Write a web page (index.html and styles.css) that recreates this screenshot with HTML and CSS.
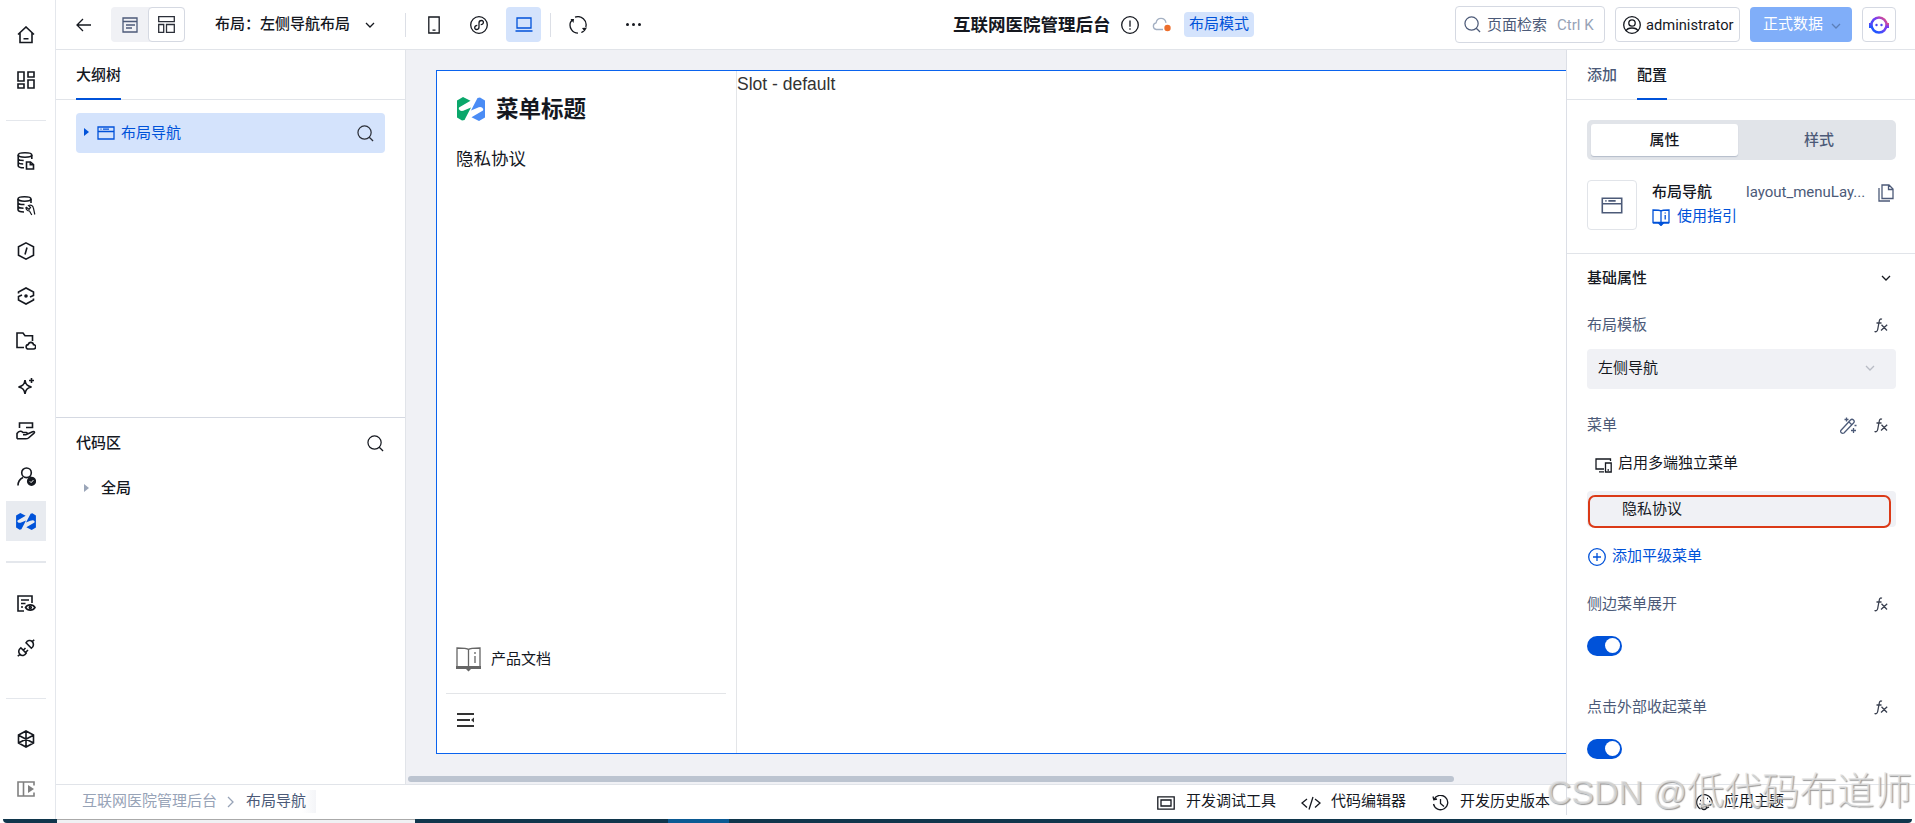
FILE: index.html
```html
<!DOCTYPE html>
<html lang="zh-CN">
<head>
    <meta charset="UTF-8">
    <meta name="viewport" content="width=device-width, initial-scale=1.0">
    <title>互联网医院管理后台</title>
    <link rel="stylesheet" href="styles.css">
</head>
<body>
    <!-- shared icons -->
    <svg class="sprite" width="0" height="0">
        <symbol id="i-search" viewBox="0 0 18 18"><circle cx="8" cy="8" r="7"/><path d="M13 13l4 4"/></symbol>
        <symbol id="i-down" viewBox="0 0 10 10"><path d="M1 3l4 4 4-4"/></symbol>
        <symbol id="i-window" viewBox="0 0 18 14"><path d="M1 1h16v12H1zM1 5.500h16M3.500 3.200h1M6 3.200h6"/></symbol>
        <symbol id="i-book" viewBox="0 0 18 17"><path d="M9 2.200C8 1 6 1 1 1v12.500h16V1c-5 0-7 0-8 1.200zM9 2v11.500M1 14h16M13.200 6v4.500M13.200 3.500v1"/><path d="M7 14.500h4L9 16.500z" fill="currentColor"/></symbol>
        <symbol id="i-fx" viewBox="0 0 14 15"><path d="M8 1.300C6.500.5 5.600 1.300 5.300 3L3.700 11.500C3.300 13.500 2 14.200.5 13.500M2.500 5h5M7.500 6.700l5.500 5.800M13.200 6.700L7 12.500"/></symbol>
        <symbol id="i-mark" viewBox="0 0 28 24"><path class="solid" d="M0 3.500L6 0l7.500 3.800L2 10.500q-1 1.500 1 3 2 1 5-.5l6-2.500L7.500 23 5 23.500l-5-3z"/></symbol>
    </svg>

    <div class="workspace">
        <nav class="rail">
            <a class="rail-item"><svg width="18" height="18" viewBox="0 0 18 18"><path d="M1 8.500L9 1l8 7.500M3 7v9.500h12V7M6.500 12.800h5"/></svg></a>
            <a class="rail-item"><svg width="18" height="18" viewBox="0 0 18 18"><path d="M1 1h6v9H1zM11 1h6v5h-6zM1 13h6v4H1zM11 9h6v8h-6z"/></svg></a>
            <div class="rail-line first"></div>
            <a class="rail-item"><svg width="18" height="18" viewBox="0 0 18 18"><ellipse cx="8" cy="3" rx="6.800" ry="2.200"/><path d="M1.200 3v10.800c0 1.200 2.500 2 5.800 2M14.800 3v4M1.200 6.500c0 1.500 2.500 2 5.500 2M1.200 10c0 1.500 2.300 2 5 2M9.500 10h4l3 2.500V17h-7zM13.300 10v2.800h3"/></svg></a>
            <a class="rail-item"><svg width="19" height="20" viewBox="0 0 19 20"><ellipse cx="7.500" cy="3" rx="6.500" ry="2.200"/><path d="M1 3v10.500c0 1.500 2.500 2.500 6 2.500M14 3v4M1 6.500c0 1.500 3 2.300 6.500 2M1 10c0 1.500 2.500 2.200 5.500 2.200"/><path class="thin" d="M9 11c-.3 2.500 1.500 4 3.500 4l2.300 4M9 11l3 2.300 1.500-1.800-2-2c2.500-1 4.500.3 5 3l1.300 6"/></svg></a>
            <a class="rail-item"><svg width="18" height="18" viewBox="0 0 18 18"><path d="M9 .9l7.500 3.800v8.600L9 17.100l-7.500-3.800V4.700zM10 5.500l-2 7"/></svg></a>
            <a class="rail-item"><svg width="18" height="18" viewBox="0 0 18 18"><path d="M1.500 6.500V5L9 1l7.500 4v3.500L13 10M16.500 11.500V13L9 17l-7.500-4V9.500L5 8"/><circle cx="9" cy="9" r="1" fill="currentColor"/></svg></a>
            <a class="rail-item"><svg width="20" height="18" viewBox="0 0 20 18"><path d="M8 15.500H1V1h6l2 2.800h7.500V9M12.500 17a2.200 2.200 0 0 1-.3-4.400c.8-3 4.600-3 5.300 0a2.200 2.200 0 0 1 0 4.400z"/></svg></a>
            <a class="rail-item"><svg width="18" height="18" viewBox="0 0 18 18"><path d="M8 3c.7 4.500 2 6 6.500 7-4.500 1-5.800 2.500-6.500 7-.7-4.500-2-6-6.500-7C6 9 7.300 7.500 8 3zM14.500 1v5M12 3.500h5"/></svg></a>
            <a class="rail-item"><svg width="20" height="18" viewBox="0 0 20 18"><path d="M3.500 6V1h13v4.500H10M1 16.800V11.500c2-3 4.500-2.500 6-1h3.300c1.500 0 1.200 2.300-.5 2.300H7M11.500 12l5-2.300c2-.8 2.600.6 1.300 1.700L12.500 16c-1 .8-1.800.8-3 .8H1"/></svg></a>
            <a class="rail-item"><svg width="19" height="19" viewBox="0 0 19 19"><circle cx="9.500" cy="5.800" r="4.800"/><path d="M1 18.500c0-4 2-6.500 5-8M13 10l1.500 1"/><circle cx="14.500" cy="14.300" r="3.800" fill="currentColor"/><path d="M12.800 14.300l1.300 1.300 2.300-2.500" stroke="#fff" stroke-width="1"/></svg></a>
            <a class="rail-item active"><svg width="20" height="17" viewBox="0 0 28 24"><use href="#i-mark" width="28" height="24"/><use href="#i-mark" width="28" height="24" transform="rotate(180 14 12)"/></svg></a>
            <div class="rail-line second"></div>
            <a class="rail-item"><svg width="19" height="17" viewBox="0 0 19 17"><path d="M7 16H1V1h14v7M4 5h8M4 8.500h4.500M4 12h2M8.500 12.500c2-3.500 7.500-3.500 9.500 0-2 3.500-7.500 3.500-9.500 0z"/><circle cx="13.300" cy="12.500" r="1"/></svg></a>
            <a class="rail-item"><svg width="18" height="18" viewBox="0 0 18 18"><path d="M.8 17.200l2-2M17.200.8l-2 2M3.800 8.800l5.400 5.400c-1.500 2.500-4.300 3-6.200 1.200s-1.700-5 .8-6.600zM9 3.800l5.400 5.400c2.500-1.600 2.600-4.800.8-6.600S10.500 1.300 9 3.800zM6.500 11l2-2M9 13l2-2"/></svg></a>
            <div class="rail-line third"></div>
            <a class="rail-item last"><svg width="18" height="18" viewBox="0 0 18 18"><path d="M9 1l7.500 4v8L9 17l-7.500-4V5zM9 1v16M1.500 5.200L16.500 13M16.500 5.200L1.500 13"/></svg></a>
            <a class="rail-item muted"><svg width="18" height="16" viewBox="0 0 18 16"><path d="M17 4.500V1H1v14h16v-3.500M6.500 1v14"/><path class="solid" d="M11 4l6 4-6 4z"/></svg></a>
        </nav>

        <div class="app">
            <header class="topbar">
                <svg class="back" width="16" height="14" viewBox="0 0 16 14"><path d="M15 7H1M7 1L1 7l6 6"/></svg>
                <div class="view-switch">
                    <span><svg width="16" height="16" viewBox="0 0 16 16"><path d="M1 1h14v14H1zM1 4.500h14M4 8h9M4 11h6"/></svg></span>
                    <span class="on"><svg width="17" height="17" viewBox="0 0 17 17"><path d="M.7.700h15.600v5H.7zM.7 8.500h5v7.800h-5zM8.500 8.500h7.800v7.800H8.500z"/></svg></span>
                </div>
                <div class="layout-name">布局：左侧导航布局</div>
                <svg class="layout-arrow" width="10" height="10"><use href="#i-down"/></svg>
                <i class="bar"></i>
                <div class="devices">
                    <span class="device"><svg width="12" height="18" viewBox="0 0 12 18"><path d="M.8 1h10.400v16H.8zM4.500 14.200h3"/></svg></span>
                    <span class="device"><svg width="18" height="18" viewBox="0 0 18 18"><circle cx="9" cy="9" r="8.300"/><path d="M7.300 9.300C4 9.500 4 13.500 6.500 13.500 8.500 13.500 9 12.500 9 11V7c0-1.500.8-2.500 2.500-2.500 2.800 0 2.500 4-.8 4.200"/></svg></span>
                    <span class="device on"><svg width="18" height="15" viewBox="0 0 18 15"><path d="M2 1h14v10H2zM.5 14h17"/></svg></span>
                </div>
                <i class="bar bar-2"></i>
                <svg class="refresh" width="18" height="18" viewBox="0 0 18 18"><path d="M6 1.200A8.200 8.200 0 0 1 16.800 11M14.800 15a8.200 8.200 0 0 1-2.500 1.500M9 17.200A8.200 8.200 0 0 1 1.500 6.300L3.500 3.500"/><path class="solid" d="M1.500 3L5 3l-.5 4zM13 12l5-.5-2.500 4z"/></svg>
                <div class="more"><i></i><i></i><i></i></div>

                <h1>互联网医院管理后台</h1>
                <svg class="info" width="18" height="18" viewBox="0 0 18 18"><circle cx="9" cy="9" r="8.300"/><path d="M9 4.500v6.300M9 12.300v1.500"/></svg>
                <svg class="cloud" width="19" height="15" viewBox="0 0 19 15"><path d="M11 12.500H4.300a3.400 3.400 0 0 1-.2-6.700C5 0 13 0 14 5.800"/><circle class="dot" cx="15.500" cy="11" r="3.200"/></svg>
                <span class="mode-tag">布局模式</span>

                <div class="top-actions">
                    <div class="box search-box"><svg width="17" height="17"><use href="#i-search"/></svg><span>页面检索</span><em>Ctrl K</em></div>
                    <div class="box user-box"><svg width="18" height="18" viewBox="0 0 18 18"><circle cx="9" cy="9" r="8.300"/><circle cx="9" cy="7" r="3.200"/><path d="M3 15c1.500-4 10.500-4 12 0"/></svg><span>administrator</span></div>
                    <div class="data-btn">正式数据<svg width="10" height="10"><use href="#i-down"/></svg></div>
                    <div class="box bot-box">
                        <svg width="20" height="18" viewBox="0 0 20 18">
                            <defs><linearGradient id="bot" x1="0" y1="1" x2="1" y2="0"><stop offset="0.200" stop-color="#2456ff"/><stop offset="0.600" stop-color="#7b3cf0"/><stop offset="1" stop-color="#f0507a"/></linearGradient></defs>
                            <circle cx="10" cy="9" r="7.500" fill="none" stroke="url(#bot)" stroke-width="2.500"/>
                            <path class="solid" fill="url(#bot)" d="M0 7h3v5H0zM17 7h3v5h-3z"/>
                            <circle cx="7.500" cy="9" r="1.200" class="solid"/><circle cx="12.500" cy="9" r="1.200" class="solid"/>
                        </svg>
                    </div>
                </div>
            </header>

            <div class="main">
                <aside class="left-panel">
                    <div class="tabs"><span class="tab on">大纲树</span></div>
                    <div class="outline">
                        <div class="tree-row">
                            <i class="caret"></i>
                            <svg width="18" height="14"><use href="#i-window"/></svg>
                            <span>布局导航</span>
                            <svg class="find" width="17" height="17"><use href="#i-search"/></svg>
                        </div>
                    </div>
                    <div class="code-area">
                        <div class="code-head">代码区<svg width="17" height="17"><use href="#i-search"/></svg></div>
                        <div class="code-row"><i class="caret"></i>全局</div>
                    </div>
                </aside>

                <section class="canvas">
                    <div class="frame">
                        <div class="menu">
                            <div class="menu-title">
                                <svg width="28" height="24" viewBox="0 0 28 24"><use class="green" href="#i-mark" width="28" height="24"/><use class="blue" href="#i-mark" width="28" height="24" transform="rotate(180 14 12)"/></svg>
                                <span>菜单标题</span>
                            </div>
                            <div class="menu-item">隐私协议</div>
                            <div class="menu-doc"><svg width="25" height="25" viewBox="0 0 25 25"><path d="M12.500 2.500C11 1 8 1 1 1v19.500h23V1c-7 0-10 0-11.500 1.500zM12.500 2.500V21M19 9v7M19 5v2"/><path class="solid" d="M0 19h25v3H15l-2.500 2.500L10 22H0z"/></svg><span>产品文档</span></div>
                            <div class="menu-fold"><svg width="18" height="14" viewBox="0 0 18 14"><path d="M0 1h17M0 7h13M0 13h17"/><path class="solid" d="M14 7l3-2.500v5z"/></svg></div>
                        </div>
                        <div class="slot">Slot - default</div>
                    </div>
                    <div class="scrollbar"></div>
                </section>

                <aside class="right-panel">
                    <div class="tabs"><span class="tab">添加</span><span class="tab on">配置</span></div>
                    <div class="summary">
                        <div class="segment"><span class="on">属性</span><span>样式</span></div>
                        <div class="component">
                            <div class="thumb"><svg width="22" height="17"><use href="#i-window"/></svg></div>
                            <div class="component-info">
                                <div class="component-name"><b>布局导航</b><span>layout_menuLay...</span><svg width="16" height="18" viewBox="0 0 16 18"><path d="M4 1h7l4 4v9.500H4zM10.500 1v4.500H15M1 4v13h11"/></svg></div>
                                <div class="guide"><svg width="18" height="17"><use href="#i-book"/></svg>使用指引</div>
                            </div>
                        </div>
                    </div>
                    <div class="props">
                        <div class="props-head">基础属性<svg width="10" height="10"><use href="#i-down"/></svg></div>
                        <div class="label">布局模板<svg class="fx" width="14" height="15"><use href="#i-fx"/></svg></div>
                        <div class="select">左侧导航<svg width="10" height="10"><use href="#i-down"/></svg></div>
                        <div class="label menu-label">菜单<svg class="wand" width="17" height="17" viewBox="0 0 17 17"><path d="M.8 13.500L10.500 3q1.500-1.500 3 0t0 3L4 16q-1.500.8-2.700-.3T.8 13.500zM9 5l3 3M6.500.5v4M4.500 2.500h4M14.500 8.500h2M13.500 11v5M11 13.500h5"/></svg><svg class="fx" width="14" height="15"><use href="#i-fx"/></svg></div>
                        <div class="multi"><svg width="17" height="15" viewBox="0 0 17 15"><path d="M15.500 3V1H1v10h8M4 13.800h5M10.500 5h5.700v9h-5.700zM12.500 12h1.500"/></svg>启用多端独立菜单</div>
                        <div class="menu-entry"><div class="entry-mark">隐私协议</div></div>
                        <div class="add"><svg width="18" height="18" viewBox="0 0 18 18"><circle cx="9" cy="9" r="8.300"/><path d="M9 5v8M5 9h8"/></svg>添加平级菜单</div>
                        <div class="label">侧边菜单展开<svg class="fx" width="14" height="15"><use href="#i-fx"/></svg></div>
                        <div class="switch"></div>
                        <div class="label outside">点击外部收起菜单<svg class="fx" width="14" height="15"><use href="#i-fx"/></svg></div>
                        <div class="switch"></div>
                    </div>
                </aside>
            </div>

            <footer class="statusbar">
                <div class="crumbs"><span>互联网医院管理后台</span><svg width="7" height="12" viewBox="0 0 7 12"><path d="M1 1l5 5-5 5"/></svg><span class="current">布局导航</span></div>
                <div class="tools">
                    <span><svg width="18" height="14" viewBox="0 0 18 14"><path d="M.8.800h16.400v12.400H.8zM4 4h10v6H4z"/></svg>开发调试工具</span>
                    <span class="editor"><svg width="20" height="14" viewBox="0 0 20 14"><path d="M6 3L1 7l5 4.500M14 3l5 4-5 4.500M12 1L8 13.500"/></svg>代码编辑器</span>
                    <span class="history"><svg width="17" height="16" viewBox="0 0 17 16"><path d="M2 4.500A7.200 7.200 0 1 1 1.500 9M1 1.500l.8 3.300L5 4M8.500 4v4.500l3.500 3"/></svg>开发历史版本</span>
                </div>
                <div class="theme"><svg width="17" height="17" viewBox="0 0 17 17"><path d="M4.500 15A7.700 7.700 0 1 1 16 9c0 2-2 2.500-4 2"/><circle cx="8" cy="13" r="2.500"/><path d="M4 6.500h1M7 4h1M11 4.500h1M13 7.500h1M3.500 10h1M11 14l2-1"/></svg>应用主题</div>
            </footer>
        </div>
    </div>
    <div class="taskbar"><i class="light"></i><i class="running"></i></div>
    <div class="watermark"><span>CSDN @</span>低代码布道师</div>
</body>
</html>
```
FILE: styles.css
```css
* {
    box-sizing: border-box;
}
body {
    margin: 0;
    width: 1915px;
    height: 823px;
    overflow: hidden;
    background: #fff;
    color: #15181f;
    font-family: Roboto, "Noto Sans CJK SC", sans-serif;
    font-size: 15px;
    line-height: 20px;
}
svg {
    display: block;
    flex: none;
    fill: none;
    stroke: currentColor;
    stroke-width: 1.3;
}
.sprite {
    position: absolute;
}
.solid {
    stroke: none;
}
path.solid:not([fill]) {
    fill: currentColor;
}
.workspace {
    display: flex;
    height: 819px;
}

/* icon rail */
.rail {
    display: flex;
    flex-direction: column;
    width: 56px;
    flex: none;
    padding: 15px 0 0 6px;
    border-right: 1px solid #e4e7ec;
}
.rail-item {
    display: flex;
    align-items: center;
    justify-content: center;
    flex: none;
    width: 40px;
    height: 40px;
    margin-bottom: 5px;
}
.rail-item svg {
    stroke-width: 1.6;
}
.rail-item .thin {
    stroke-width: 1.2;
}
.rail-item.active {
    background: #e8ebf0;
    color: #0052d9;
}
.rail-item.muted {
    margin-bottom: 0;
    color: #808080;
}
.rail-item.last {
    margin-bottom: 10px;
}
.rail-line {
    flex: none;
    width: 40px;
    height: 1px;
    background: #e4e7ec;
}
.rail-line.first {
    margin: 15px 0 20px;
}
.rail-line.second {
    height: 2px;
    margin: 15px 0 20px;
}
.rail-line.third {
    margin: 25px 0 20px;
}

.app {
    display: flex;
    flex-direction: column;
    flex: 1;
    min-width: 0;
}

/* top bar */
.topbar {
    display: flex;
    align-items: center;
    height: 50px;
    flex: none;
    padding: 0 19px 0 20px;
    border-bottom: 1px solid #e1e4e9;
}
.view-switch {
    display: flex;
    margin-left: 19px;
    border-radius: 4px;
    background: #f0f1f5;
    color: #4c5a78;
}
.view-switch span {
    display: flex;
    align-items: center;
    justify-content: center;
    width: 37px;
    height: 35px;
}
.view-switch .on {
    border: 1px solid #d5d9e2;
    border-radius: 4px;
    background: #fff;
    color: #2b2f38;
}
.layout-name {
    margin: -2px 0 0 30px;
    width: 135px;
    font-weight: 500;
    white-space: nowrap;
}
.layout-arrow {
    margin-left: 15px;
}
.bar {
    width: 1px;
    height: 24px;
    margin-left: 30px;
    background: #dcdfe6;
}
.bar-2 {
    margin-left: 9px;
}
.devices {
    display: flex;
    gap: 10px;
    margin-left: 10px;
}
.device {
    display: flex;
    align-items: center;
    justify-content: center;
    width: 35px;
    height: 35px;
    border-radius: 4px;
}
.device.on {
    background: #d4e3fc;
    color: #0052d9;
}
.refresh {
    margin-left: 18px;
}
.more {
    display: flex;
    gap: 3px;
    margin-left: 39px;
}
.more i {
    width: 3px;
    height: 3px;
    border-radius: 50%;
    background: #15181f;
}
h1 {
    margin: 1px 0 0 312px;
    width: 158px;
    font-size: 17.5px;
    font-weight: 700;
    white-space: nowrap;
}
.info {
    margin-left: 10px;
}
.cloud {
    margin-left: 13px;
    color: #a3afc2;
}
.cloud .dot {
    fill: #ed6f2d;
    stroke: none;
}
.mode-tag {
    width: 70px;
    height: 25px;
    margin-left: 13px;
    border-radius: 4px;
    background: #d4e3fc;
    color: #0052d9;
    line-height: 24px;
    text-align: center;
}
.top-actions {
    display: flex;
    align-items: center;
    gap: 10px;
    margin-left: auto;
}
.box {
    display: flex;
    align-items: center;
    height: 35px;
    border: 1px solid #d5d9e2;
    border-radius: 4px;
}
.search-box {
    width: 150px;
    height: 37px;
    padding-left: 8px;
    color: #4c5a78;
}
.search-box span {
    margin-left: 6px;
}
.search-box em {
    margin-left: 10px;
    color: #97a3b7;
    font-style: normal;
}
.user-box {
    width: 125px;
    padding-left: 7px;
}
.user-box span {
    margin-left: 5px;
    font-size: 14.700px;
}
.data-btn {
    display: flex;
    width: 102px;
    height: 35px;
    padding-left: 13px;
    border-radius: 4px;
    background: #80aef9;
    color: #fff;
    line-height: 34px;
}
.data-btn svg {
    margin: 14px 0 0 8px;
    color: #5c7fb8;
}
.bot-box {
    width: 34px;
    justify-content: center;
}
.bot-box circle.solid {
    fill: #4a48f0;
}

.main {
    display: flex;
    flex: 1;
    min-height: 0;
}
.tabs {
    display: flex;
    gap: 20px;
    height: 50px;
    padding-left: 20px;
    border-bottom: 1px solid #e1e4e9;
}
.tab {
    height: 50px;
    color: #4c5a78;
    font-weight: 500;
    line-height: 50px;
}
.tab.on {
    border-bottom: 2px solid #0052d9;
    color: #15181f;
}

/* outline and code panels */
.left-panel {
    width: 350px;
    flex: none;
    border-right: 1px solid #e1e4e9;
}
.outline {
    height: 317px;
    padding: 13px 20px;
}
.tree-row {
    display: flex;
    align-items: center;
    height: 40px;
    padding: 0 11px 0 8px;
    border-radius: 4px;
    background: #d4e3fc;
    color: #0052d9;
}
.caret {
    border-left: 5px solid currentColor;
    border-top: 4px solid transparent;
    border-bottom: 4px solid transparent;
}
.tree-row .caret {
    margin: -3px 8px 0 0;
}
.tree-row span {
    margin: -1px 0 0 6px;
}
.tree-row .find {
    margin-left: auto;
    color: #2b2f38;
}
.code-area {
    padding: 15px 21px 0 20px;
    border-top: 1px solid #d5d9e2;
    font-weight: 500;
}
.code-head {
    display: flex;
    align-items: center;
    justify-content: space-between;
}
.code-row {
    display: flex;
    align-items: center;
    margin-top: 25px;
    padding-left: 8px;
}
.code-row .caret {
    margin-right: 12px;
    border-left-color: #9aa5b8;
}

/* design canvas */
.canvas {
    display: flex;
    flex-direction: column;
    flex: 1;
    min-width: 0;
    padding: 20px 0 0 30px;
    background: #f0f1f5;
}
.frame {
    display: flex;
    height: 684px;
    border: 1px solid #0a63ee;
    border-right: 0;
    background: #fff;
}
.menu {
    display: flex;
    flex-direction: column;
    width: 300px;
    border-right: 1px solid #e3e5e8;
}
.menu-title {
    display: flex;
    align-items: center;
    height: 34px;
    margin: 21px 0 0 20px;
    font-size: 22.500px;
    font-weight: 700;
}
.menu-title .green {
    color: #0aa76b;
}
.menu-title .blue {
    color: #4a8cf5;
}
.menu-title span {
    margin: -1px 0 0 11px;
}
.menu-item {
    margin: 21px 0 0 19px;
    font-size: 17.500px;
    line-height: 24px;
}
.menu-doc {
    display: flex;
    align-items: center;
    margin: auto 0 21px 19px;
}
.menu-doc svg {
    color: #666;
}
.menu-doc span {
    margin: -2px 0 0 10px;
}
.menu-fold {
    height: 60px;
    margin: 0 10px 0 9px;
    padding: 19px 0 0 11px;
    border-top: 1px solid #e3e5e8;
    color: #333;
}
.menu-fold svg {
    stroke-width: 2;
}
.slot {
    color: #333;
    font-family: "Liberation Sans", Arial, sans-serif;
    font-size: 17.500px;
    line-height: 27px;
}
.scrollbar {
    width: 1046px;
    height: 6px;
    margin: 22px 0 0 -28px;
    border-radius: 3px;
    background: #bcc4d0;
}

/* settings panel */
.right-panel {
    width: 349px;
    flex: none;
    border-left: 1px solid #dcdfe6;
}
.summary {
    height: 154px;
    padding: 20px 19px 0 20px;
    border-bottom: 1px solid #e1e4e9;
}
.segment {
    display: flex;
    height: 40px;
    padding: 4px;
    border-radius: 5px;
    background: #e1e4e9;
    color: #4c5a78;
    font-weight: 500;
    line-height: 32px;
    text-align: center;
}
.segment span {
    flex: 1;
    padding-left: 8px;
}
.segment .on {
    flex: 0 0 147px;
    height: 32px;
    padding-left: 0;
    border-radius: 3px;
    background: #fff;
    box-shadow: 0 1px 1px #b4bcca;
    color: #15181f;
}
.component {
    display: flex;
    margin-top: 20px;
}
.thumb {
    display: flex;
    align-items: center;
    justify-content: center;
    width: 50px;
    height: 50px;
    border: 1px solid #e1e4e9;
    border-radius: 4px;
    color: #4c5a78;
}
.component-info {
    flex: 1;
    margin-left: 15px;
    padding-top: 1px;
}
.component-name {
    display: flex;
    align-items: center;
    color: #4c5a78;
}
.component-name b {
    width: 94px;
    color: #15181f;
    font-weight: 500;
}
.component-name svg {
    margin: 3px 2px 0 auto;
}
.guide {
    display: flex;
    align-items: center;
    gap: 7px;
    margin-top: 4px;
    color: #0052d9;
}
.guide svg {
    margin-top: 2px;
}
.props {
    padding: 14px 19px 0 20px;
}
.props-head,
.label {
    display: flex;
    align-items: center;
    height: 20px;
}
.props-head {
    margin-bottom: 27px;
    font-weight: 500;
}
.props-head svg {
    margin-left: auto;
    margin-right: 5px;
}
.label {
    color: #4c5a78;
}
.label .fx {
    margin: 0 8px 0 auto;
    color: #3a4050;
}
.select {
    display: flex;
    height: 40px;
    margin-top: 14px;
    padding: 0 21px 0 11px;
    border-radius: 4px;
    background: #f0f1f5;
    line-height: 38px;
}
.select svg {
    margin: 14px 0 0 auto;
    color: #b8bcc5;
}
.menu-label {
    margin-top: 26px;
}
.menu-label .wand {
    margin-left: auto;
}
.menu-label .fx {
    margin-left: 17px;
}
.multi {
    display: flex;
    align-items: center;
    gap: 6px;
    margin-top: 18px;
    padding-left: 8px;
}
.multi svg {
    margin-top: 4px;
}
.menu-entry {
    height: 36px;
    margin: 18px 0;
    padding: 4px 5px 0 1px;
    border-radius: 4px;
    background: #f0f1f5;
}
.entry-mark {
    height: 33px;
    padding-left: 32px;
    border: 2px solid #db3a17;
    border-radius: 7px;
    line-height: 24px;
}
.add {
    display: flex;
    align-items: center;
    gap: 6px;
    margin-bottom: 28px;
    padding-left: 1px;
    color: #0052d9;
}
.add svg {
    margin-top: 3px;
}
.switch {
    width: 35px;
    height: 20px;
    margin-top: 22px;
    padding: 2px 2px 2px 18px;
    border-radius: 10px;
    background: #0052d9;
}
.switch::before {
    content: "";
    display: block;
    width: 15px;
    height: 15px;
    border-radius: 50%;
    background: #fff;
}
.outside {
    margin-top: 41px;
}

/* status bar */
.statusbar {
    display: flex;
    align-items: center;
    height: 35px;
    flex: none;
    padding-bottom: 2px;
    border-top: 1px solid #e1e4e9;
}
.crumbs {
    display: flex;
    align-items: center;
    padding-left: 26px;
    color: #97a3b7;
}
.crumbs svg {
    margin: 2px 12px 0 10px;
}
.crumbs .current {
    width: 70px;
    padding-right: 10px;
    background: linear-gradient(90deg, #fff 80%, #f4f5f8);
    color: #4c5a78;
    line-height: 23px;
    white-space: nowrap;
}
.tools {
    display: flex;
    margin-left: auto;
    padding-right: 16px;
    height: 28px;
    border-right: 1px solid #dcdfe6;
}
.tools span,
.theme {
    display: flex;
    align-items: center;
    gap: 11px;
}
.tools .editor {
    margin-left: 25px;
    gap: 10px;
}
.tools .history {
    margin-left: 26px;
}
.theme {
    width: 348px;
    padding-left: 129px;
}
.tools svg,
.theme svg {
    margin-top: 3px;
}

.taskbar {
    display: flex;
    height: 4px;
    margin: 0 3px;
    padding-left: 54px;
    border-radius: 0 0 4px 4px;
    background: #10364c;
}
.taskbar .light {
    width: 358px;
    border-top: 1px solid #aaa;
    background: #f0f1f3;
}
.taskbar .running {
    width: 61px;
    margin-left: 253px;
    background: #0b5a94;
}

.watermark {
    position: absolute;
    right: 3px;
    bottom: 6px;
    color: rgba(225, 225, 225, 0.75);
    font-family: "Liberation Sans", "Noto Sans CJK SC", sans-serif;
    font-size: 37.500px;
    font-weight: 300;
    line-height: 50px;
    text-shadow: 1px 1px 1px #999;
    white-space: nowrap;
}
.watermark span {
    font-size: 34px;
}
```
